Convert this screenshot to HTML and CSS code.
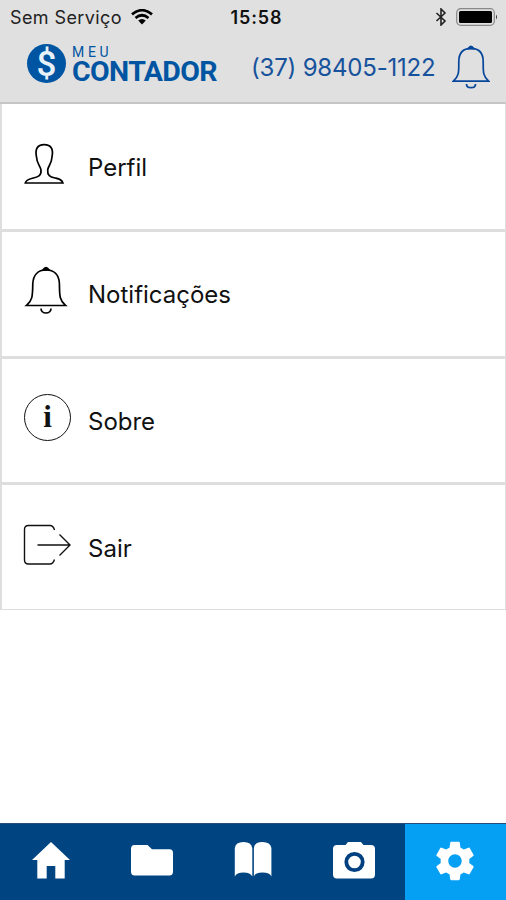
FILE: index.html
```html
<!DOCTYPE html>
<html lang="pt-BR">
<head>
<meta charset="utf-8">
<title>Meu Contador</title>
<link rel="stylesheet" href="styles.css">
</head>
<body>
<div class="app">
  <header class="header">
    <div class="status">
      <div class="carrier"><span class="carrier-name">Sem Serviço</span>
        <svg class="wifi" width="22" height="16" viewBox="0 0 22 16" fill="none" stroke="#000" stroke-width="2.7"><path d="M1 5.4Q11-3 21 5.4M4.5 9Q11 3.5 17.5 9"/><path d="M7.2 11.6Q11 8.2 14.8 11.6L11 15.5Z" fill="#000" stroke="none"/></svg>
      </div>
      <span class="clock">15:58</span>
      <div class="indicators">
        <svg width="12" height="18" viewBox="0 0 12 18" fill="none" stroke="#222" stroke-width="1.6"><path d="M1.500 5l8.500 8-4 4V1l4 4-8.500 8"/></svg>
        <svg width="42" height="18" viewBox="0 0 42 18"><rect x=".7" y=".7" width="37.6" height="16.6" rx="4" fill="none" stroke="#888" stroke-width="1.2"/><rect x="3" y="3" width="33" height="12" rx="1.5"/><path d="M40 6.500q2 2.500 0 5z" fill="#333"/></svg>
      </div>
    </div>
    <div class="brandbar">
      <div class="coin"><span>$</span></div>
      <div class="brand"><span class="brand-top">MEU</span><span class="brand-name">CONTADOR</span></div>
      <span class="phone">(37) 98405-1122</span>
      <svg class="header-bell" width="38" height="44" viewBox="0 0 42 48" preserveAspectRatio="none" fill="none" stroke="#07479b" stroke-width="1.9"><path d="M1.500 39.500C8 34 7.500 29 7.500 18.500C7.500 9 12.500 3.800 21 3.800S34.500 9 34.500 18.500C34.500 29 34 34 40.500 39.500Z"/><path d="M16 42.500C16 48 26 48 26 42.500"/><path d="M18 4Q21-1 24 4Z" fill="#07479b"/></svg>
    </div>
  </header>
  <main class="menu">
    <div class="item">
      <svg class="icon" width="48" height="48" viewBox="0 0 48 48" fill="none" stroke="#000" stroke-width="1.700"><path d="M2.300 42C3 38.500 6.500 38 10.500 37C15.500 35.700 18.500 34.500 18 29C17.500 25 13.800 23 13.500 16C12 8.500 14 3.700 21.200 3.700S30.500 8.500 29 16C28.700 23 25 25 24.700 29C24.200 34.500 27 35.700 32 37C36 38 39 38.500 39.900 42Z"/></svg>
      <span class="label">Perfil</span>
    </div>
    <div class="item lifted">
      <svg class="icon" width="48" height="48" viewBox="0 0 48 48" fill="none" stroke="#000" stroke-width="1.700"><path d="M3.500 39.500C10 34 9.500 29 9.800 17.500C10.300 9 15 3.800 23 3.800S36 9 36.400 17.500C36.700 29 36 34 42.500 39.500Z"/><path d="M18 42.500C18 48.500 28 48.500 28 42.500"/><path d="M20 4Q23-1 26 4Z" fill="#000"/></svg>
      <span class="label">Notificações</span>
    </div>
    <div class="item">
      <span class="icon info">i</span>
      <span class="label">Sobre</span>
    </div>
    <div class="item exit">
      <svg class="icon" width="48" height="48" viewBox="0 0 48 48" fill="none" stroke="#111" stroke-width="1.400"><path d="M31.500 9C30.500 5.500 29 4.500 27 4.500H5.500Q1.500 4.500 1.500 8.500V39Q1.500 43 5.500 43H27C29 43 30.500 41.500 31.500 38.500"/><path d="M14.500 24H46.500M36.500 13.500L47 24L36.500 34.500"/></svg>
      <span class="label">Sair</span>
    </div>
  </main>
  <nav class="tabs">
    <div class="tab"><svg width="44" height="44" viewBox="0 0 44 44" fill="#fff"><path d="M22 3L41 21H35.700V39.500H26.300V27H17.700V39.500H8.300V21H3Z"/></svg></div>
    <div class="tab"><svg width="44" height="44" viewBox="0 0 44 44" fill="#fff"><path d="M4.500 6H17.500L22 10.300H39.500Q43 10.300 43 14V32.500Q43 36.500 39.500 36.500H4.500Q1 36.500 1 32.500V10Q1 6 4.500 6Z"/></svg></div>
    <div class="tab"><svg width="44" height="44" viewBox="0 0 44 44" fill="#fff"><path d="M3.800 9Q4.500 3 12.500 3T21.300 9V37.500Q19.500 33.500 12.500 33.500T3.800 37.500ZM22.900 9Q23.500 3 31.500 3T40.400 9V37.500Q39 33.500 31.500 33.500T22.900 37.500Z"/></svg></div>
    <div class="tab"><svg width="44" height="44" viewBox="0 0 44 44"><path fill="#fff" d="M5 6H13.500L16 3H29L31.500 6H39Q43 6 43 10V35.500Q43 39.500 39 39.500H5Q1 39.500 1 35.500V10Q1 6 5 6Z"/><circle cx="22.500" cy="23" r="8.200" fill="none" stroke="#003f80" stroke-width="3.800"/></svg></div>
    <div class="tab active"><svg width="46" height="46" viewBox="0 0 24 24"><path fill="#fff" d="M19.430 12.980c.04-.32.070-.64.070-.98s-.03-.66-.07-.98l2.110-1.650c.19-.15.240-.42.120-.64l-2-3.460c-.12-.22-.39-.3-.61-.22l-2.490 1c-.52-.4-1.080-.73-1.690-.98l-.38-2.650C14.460 2.180 14.250 2 14 2h-4c-.25 0-.46.180-.49.420l-.38 2.650c-.61.250-1.170.590-1.690.980l-2.490-1c-.23-.09-.49 0-.61.220l-2 3.460c-.13.220-.07.490.120.640l2.110 1.650c-.04.320-.07.650-.07.980s.03.660.070.980l-2.110 1.650c-.19.150-.24.420-.12.640l2 3.460c.12.220.39.300.61.220l2.490-1c.52.400 1.080.730 1.690.980l.38 2.650c.03.240.24.420.49.420h4c.25 0 .46-.18.490-.42l.38-2.650c.61-.25 1.170-.59 1.690-.98l2.490 1c.23.090.49 0 .61-.22l2-3.460c.12-.22.070-.49-.12-.64l-2.110-1.650zM12 15.500c-1.930 0-3.500-1.570-3.500-3.500s1.570-3.500 3.500-3.500 3.500 1.570 3.500 3.500-1.570 3.500-3.500 3.500z"/></svg></div>
  </nav>
</div>
</body>
</html>
```
FILE: styles.css
```css
* { box-sizing: border-box; }
body { margin: 0; background: #fff; color: #111; font-family: Inter, "Liberation Sans", sans-serif; }
svg { display: block; flex: none; }
.app { height: 900px; display: flex; flex-direction: column; overflow: hidden; }
.header { height: 104px; background: #e0e0e0; border-bottom: 2px solid #c6c6c6; flex: none; }
.status { height: 34px; display: grid; grid-template-columns: 1fr auto 1fr; align-items: center; padding: 0 8px 0 10px; }
.carrier { display: flex; align-items: center; gap: 9px; color: #222; font-size: 18px; letter-spacing: .4px; white-space: nowrap; }
.clock { font-size: 18px; font-weight: 600; letter-spacing: .9px; color: #111; padding-left: 5px; }
.indicators { display: flex; justify-content: flex-end; align-items: center; gap: 9px; }
.brandbar { display: flex; height: 68px; padding-left: 27px; white-space: nowrap; }
.coin { width: 39px; height: 39px; margin-top: 10px; border-radius: 50%; background: #0055a2; color: #e8f0f8; display: flex; align-items: center; justify-content: center; font: 500 35px/39px Roboto, sans-serif; padding-top: 2px; }
.brand { width: 153px; margin-left: 6px; padding-top: 10px; display: flex; flex-direction: column; color: #0055a2; font-family: Roboto, sans-serif; }
.brand-top { font-size: 14px; line-height: 16px; letter-spacing: 3.700px; }
.brand-name { font-size: 28.500px; line-height: 24px; font-weight: 700; letter-spacing: -.6px; }
.phone { width: 202px; margin-left: 26px; line-height: 68px; font-size: 24px; letter-spacing: -.2px; color: #17529c; }
.header-bell { margin-top: 11px; margin-left: -1px; }
.menu { height: 506px; display: grid; grid-template-rows: 128px 127px 126px 124px; border: solid #dedede; border-width: 0 1px 1px 2px; flex: none; }
.item { display: flex; align-items: center; padding-left: 21px; border-bottom: 3px solid #dedede; }
.item:last-child { border-bottom: 0; }
.icon { width: 48px; height: 48px; margin-top: -3px; }
.lifted .icon { margin-top: -9px; }
.lifted .label { padding-top: 1px; }
.info { border: 1.500px solid #111; border-radius: 50%; font: 700 31px/43px "Liberation Serif", serif; text-align: center; width: 47px; height: 47px; margin-left: 1px; margin-top: -6px; }
.exit .icon { margin-top: -5px; }
.label { margin-left: 17px; padding-top: 3px; font-size: 24px; line-height: 32px; }
.tabs { height: 77px; margin-top: auto; display: grid; grid-template-columns: repeat(5, 1fr); background: #004582; border-top: 1px solid #284c75; flex: none; }
.tab { display: flex; align-items: center; justify-content: center; padding-bottom: 2px; }
.active { background: #059ff3; }
```
